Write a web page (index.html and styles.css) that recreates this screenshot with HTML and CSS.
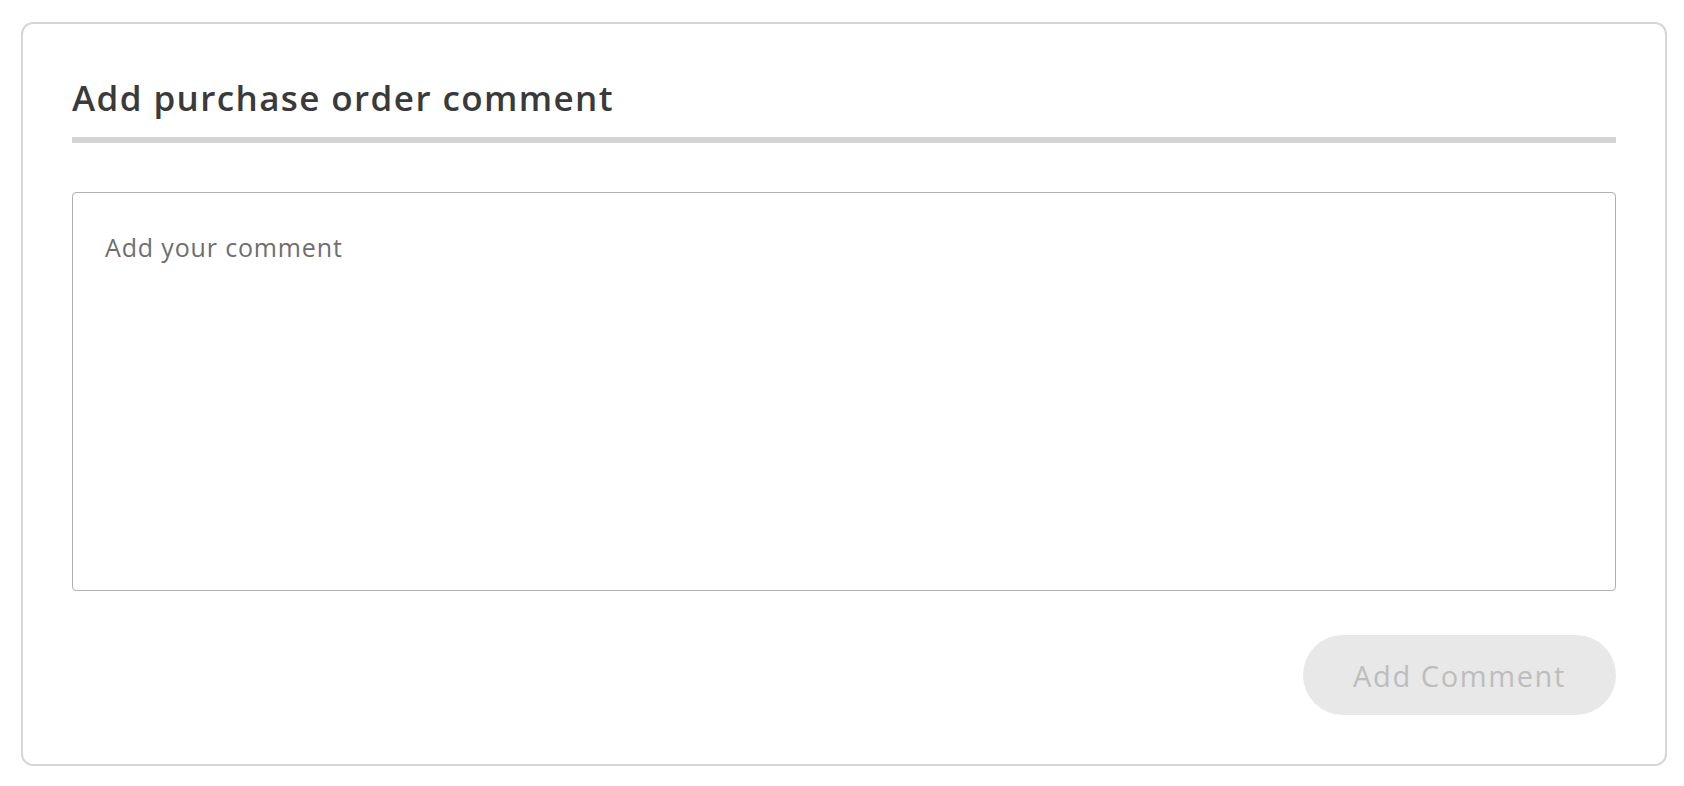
FILE: index.html
```html
<!DOCTYPE html>
<html lang="en">
<head>
<meta charset="utf-8">
<title>Add purchase order comment</title>
<link rel="stylesheet" href="styles.css">
</head>
<body>
<section class="card">
  <h2 class="card-title">Add purchase order comment</h2>
  <textarea class="comment-input" placeholder="Add your comment"></textarea>
  <div class="actions">
    <button class="btn-add" type="button" disabled>Add Comment</button>
  </div>
</section>
</body>
</html>
```
FILE: styles.css
```css
html, body {
  margin: 0;
  padding: 0;
  background: #ffffff;
}
body {
  font-family: "Open Sans", "Noto Sans", "Liberation Sans", sans-serif;
}
.card {
  box-sizing: border-box;
  margin: 22px 0 0 21px;
  width: 1646px;
  height: 744px;
  border: 2px solid #d6d6d6;
  border-radius: 12px;
  padding: 53px 49px 49px 49px;
  display: flex;
  flex-direction: column;
}
.card-title {
  margin: 0;
  font-size: 35px;
  font-weight: 600;
  line-height: 42px;
  letter-spacing: 1.4px;
  color: #3a3a3a;
  padding-bottom: 18px;
  border-bottom: 6px solid #d4d4d4;
}
.comment-input {
  box-sizing: border-box;
  display: block;
  margin-top: 49px;
  width: 100%;
  height: 399px;
  border: 1px solid #b1b1b1;
  border-radius: 4px;
  padding: 37px 32px 33px;
  resize: none;
  font-family: inherit;
  font-size: 25px;
  line-height: 34px;
  letter-spacing: 0.85px;
  color: #333;
  background: #fff;
  outline: none;
}
.comment-input::placeholder {
  color: #6e6e6e;
  opacity: 1;
}
.actions {
  display: flex;
  justify-content: flex-end;
  margin-top: 44px;
}
.btn-add {
  box-sizing: border-box;
  width: 313px;
  height: 80px;
  border: none;
  border-radius: 40px;
  background: #e8e8e8;
  color: #bdbdbd;
  font-family: inherit;
  font-size: 29px;
  letter-spacing: 1.6px;
  padding: 0;
  cursor: default;
}
```
